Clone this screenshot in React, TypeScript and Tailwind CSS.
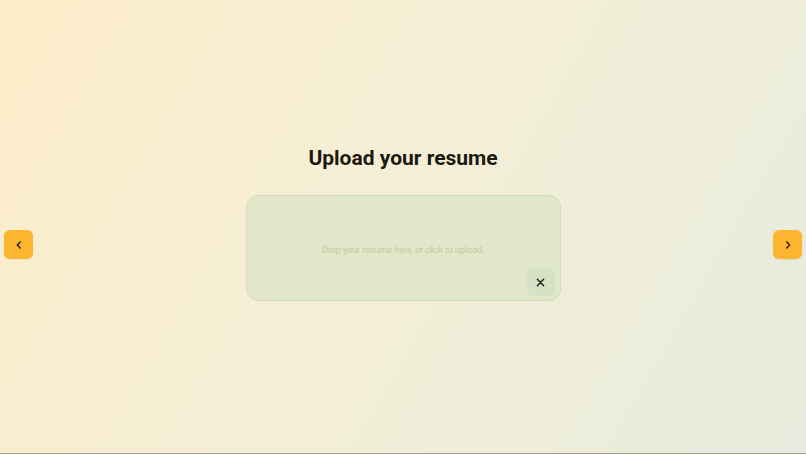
import React from "react";

function Chevron({ dir }: { dir: "left" | "right" }) {
  return (
    <svg width="10" height="10" viewBox="0 0 24 24" fill="none" stroke="#2a1d05" strokeWidth="3.5" strokeLinecap="round" strokeLinejoin="round">
      {dir === "left" ? <path d="M15 5l-7 7 7 7" /> : <path d="M9 5l7 7-7 7" />}
    </svg>
  );
}

export default function App() {
  return (
    <div
      className="w-[806px] h-[454px] flex flex-col border-b border-[#a3a38c] bg-[linear-gradient(120deg,#fdedc9_0%,#f5efd6_45%,#e6ebdd_100%)]"
      style={{ fontFamily: "Roboto, 'Noto Sans', sans-serif" }}
    >
      <div className="flex-1 flex items-center justify-between px-[4px] pt-[36px]">
        <button className="w-[29px] h-[29px] rounded-[6px] bg-[#fdb42f] flex items-center justify-center shadow-[0_1px_2px_rgba(0,0,0,0.06)]">
          <Chevron dir="left" />
        </button>
        <div className="flex flex-col items-center mb-[45px]">
          <h1 className="text-[21px] font-bold text-[#1b1a10] leading-[30px]">Upload your resume</h1>
          <div className="relative mt-[22px] w-[315px] h-[106px] rounded-[12px] border border-[#d4dcbf] bg-[#e1e7c9] flex items-center justify-center pt-[4px]">
            <span className="text-[9.5px] tracking-[-0.3px] text-[#c2cba6]">Drop your resume here, or click to upload.</span>
            <div className="absolute right-[5px] bottom-[4px] w-[28px] h-[28px] rounded-[6px] bg-[#d7e1c5] flex items-center justify-center">
              <svg width="9" height="9" viewBox="0 0 10 10" stroke="#1e2012" strokeWidth="1.6" strokeLinecap="round">
                <path d="M1.5 1.5l7 7M8.5 1.5l-7 7" />
              </svg>
            </div>
          </div>
        </div>
        <button className="w-[29px] h-[29px] rounded-[6px] bg-[#fdb42f] flex items-center justify-center shadow-[0_1px_2px_rgba(0,0,0,0.06)]">
          <Chevron dir="right" />
        </button>
      </div>
    </div>
  );
}
